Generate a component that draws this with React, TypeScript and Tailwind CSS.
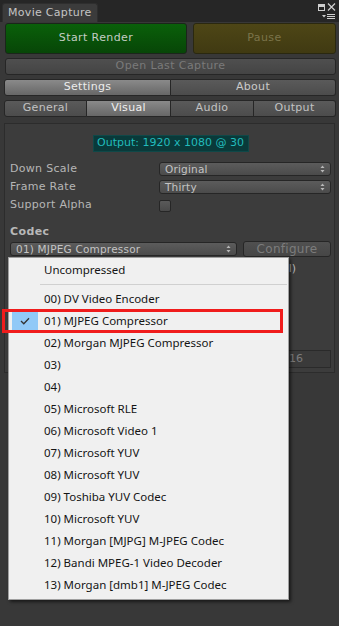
import React from "react";

const Arrows = () => (
  <svg width="5" height="8" viewBox="0 0 5 8" className="shrink-0">
    <path d="M2.5 0.5 L4.5 3 L0.5 3 Z" fill="#b8b8b8" />
    <path d="M2.5 7.5 L4.5 5 L0.5 5 Z" fill="#b8b8b8" />
  </svg>
);

const Dropdown = ({ text, className = "" }: { text: string; className?: string }) => (
  <div
    className={
      "h-[14px] rounded-[3px] border border-[#262626] bg-gradient-to-b from-[#5c5c5c] to-[#4b4b4b] text-[#c4c4c4] text-[10.5px] leading-[12px] pl-[5px] pr-[5px] flex items-center justify-between " +
      className
    }
  >
    <span className="tracking-[0.2px] whitespace-nowrap">{text}</span>
    <Arrows />
  </div>
);

const items = [
  "00) DV Video Encoder",
  "01) MJPEG Compressor",
  "02) Morgan MJPEG Compressor",
  "03)",
  "04)",
  "05) Microsoft RLE",
  "06) Microsoft Video 1",
  "07) Microsoft YUV",
  "08) Microsoft YUV",
  "09) Toshiba YUV Codec",
  "10) Microsoft YUV",
  "11) Morgan [MJPG] M-JPEG Codec",
  "12) Bandi MPEG-1 Video Decoder",
  "13) Morgan [dmb1] M-JPEG Codec",
];

export default function App() {
  return (
    <div className="w-[339px] h-[626px] bg-[#383838] relative overflow-hidden font-['DejaVu_Sans',sans-serif] text-[11px]">
      {/* title bar */}
      <div className="h-[22px] bg-[#262626] flex items-end">
        <div className="ml-[2px] h-[19px] w-[96px] bg-[#3b3b3b] rounded-t-[3px] border-t border-x border-[#2e2e2e] text-[#c4c4c4] text-[11px] leading-[18px] pl-[5px] tracking-[0.3px] whitespace-nowrap">
          Movie Capture
        </div>
        <div className="ml-auto mr-[3px] self-start pt-[2px] flex flex-col items-end">
          <svg width="18" height="10" viewBox="0 0 18 10">
            <rect x="0.5" y="2.5" width="6" height="6" fill="none" stroke="#cfcfcf" strokeWidth="1" />
            <rect x="1" y="3" width="5" height="2" fill="#cfcfcf" />
            <path d="M10 1.5 L17 8.5 M17 1.5 L10 8.5" stroke="#cfcfcf" strokeWidth="1.2" />
          </svg>
          <svg width="14" height="7" viewBox="0 0 14 7" className="mt-[1px]">
            <path d="M0 2 L4 2 L2 4.5 Z" fill="#cfcfcf" />
            <rect x="5" y="1" width="8" height="1" fill="#cfcfcf" />
            <rect x="5" y="3" width="8" height="1" fill="#cfcfcf" />
            <rect x="5" y="5" width="8" height="1" fill="#cfcfcf" />
          </svg>
        </div>
      </div>

      {/* big buttons */}
      <div className="pl-[5px] pr-[3px] pt-[1px] flex gap-[6px]">
        <div className="w-[182px] h-[31px] rounded-[3px] border border-[#1a261a] bg-gradient-to-b from-[#0a600a] to-[#074607] flex items-center justify-center text-[#c4cdc4] text-[11px] tracking-[0.4px]">
          Start Render
        </div>
        <div className="flex-1 h-[31px] rounded-[3px] border border-[#2a2810] bg-gradient-to-b from-[#4e4616] to-[#403a12] flex items-center justify-center text-[#7b744a] text-[11px] tracking-[0.4px]">
          Pause
        </div>
      </div>

      <div className="pl-[5px] pr-[3px] mt-[4px]">
        <div className="h-[17px] rounded-[3px] border border-[#262626] bg-gradient-to-b from-[#4f4f4f] to-[#444444] flex items-center justify-center text-[#7a7a7a] text-[11px] tracking-[0.4px]">
          Open Last Capture
        </div>
      </div>

      {/* settings / about */}
      <div className="pl-[4px] pr-[3px] mt-[4px] flex h-[17px]">
        <div className="w-[167px] rounded-l-[3px] border border-[#262626] bg-gradient-to-b from-[#8a8a8a] to-[#676767] flex items-center justify-center text-[#ececec] text-[11px] tracking-[0.3px]">
          Settings
        </div>
        <div className="flex-1 rounded-r-[3px] border border-l-0 border-[#262626] bg-gradient-to-b from-[#5a5a5a] to-[#4c4c4c] flex items-center justify-center text-[#cacaca] text-[11px] tracking-[0.3px]">
          About
        </div>
      </div>

      {/* sub tabs */}
      <div className="pl-[4px] pr-[3px] mt-[4px] flex h-[17px]">
        <div className="w-[83px] rounded-l-[3px] border border-[#262626] bg-gradient-to-b from-[#5a5a5a] to-[#4c4c4c] flex items-center justify-center text-[#c2c2c2] tracking-[0.3px]">
          General
        </div>
        <div className="w-[84px] border border-l-0 border-[#262626] bg-gradient-to-b from-[#8a8a8a] to-[#676767] flex items-center justify-center text-[#f0f0f0] tracking-[0.3px]">
          Visual
        </div>
        <div className="w-[83px] border border-l-0 border-[#262626] bg-gradient-to-b from-[#5a5a5a] to-[#4c4c4c] flex items-center justify-center text-[#c2c2c2] tracking-[0.3px]">
          Audio
        </div>
        <div className="flex-1 rounded-r-[3px] border border-l-0 border-[#262626] bg-gradient-to-b from-[#5a5a5a] to-[#4c4c4c] flex items-center justify-center text-[#c2c2c2] tracking-[0.3px]">
          Output
        </div>
      </div>

      {/* panel */}
      <div className="ml-[4px] mr-[4px] mt-[6px] h-[250px] border border-[#2c2c2c] bg-[#3c3c3c] pl-[5px] pr-[3px]">
        <div className="flex justify-center pt-[11px]">
          <div className="w-[156px] h-[17px] bg-[#093a3a] border border-[#0f4848] flex items-center justify-center text-[#22bcbc] text-[11px] whitespace-nowrap">
            Output: 1920 x 1080 @ 30
          </div>
        </div>

        <div className="mt-[10px] flex items-center h-[14px]">
          <div className="w-[149px] text-[#b6b6b6] tracking-[0.3px]">Down Scale</div>
          <Dropdown text="Original" className="flex-1" />
        </div>
        <div className="mt-[4px] flex items-center h-[14px]">
          <div className="w-[149px] text-[#b6b6b6] tracking-[0.3px]">Frame Rate</div>
          <Dropdown text="Thirty" className="flex-1" />
        </div>
        <div className="mt-[4px] flex items-center h-[14px]">
          <div className="w-[149px] text-[#b6b6b6] tracking-[0.3px]">Support Alpha</div>
          <div className="w-[12px] h-[12px] mt-[2px] rounded-[2px] border border-[#262626] bg-gradient-to-b from-[#5a5a5a] to-[#4a4a4a]" />
        </div>

        <div className="mt-[12px] h-[14px] font-bold text-[#b8b8b8] tracking-[0.4px]">Codec</div>
        <div className="mt-[3px] flex items-start">
          <Dropdown text="01) MJPEG Compressor" className="w-[227px] mt-[1px]" />
          <div className="ml-[6px] flex-1 h-[16px] rounded-[3px] border border-[#262626] bg-gradient-to-b from-[#505050] to-[#464646] flex items-center justify-center text-[#7c7c7c] text-[12px] tracking-[0.3px]">
            Configure
          </div>
        </div>
        <div className="mt-[4px] flex justify-end pr-[35px] text-[#b6b6b6]">(Manual)</div>
        <div className="mt-[72px] flex justify-end">
          <div className="w-[45px] h-[18px] border border-[#2a2a2a] bg-[#3a3a3a] text-[#7a7a7a] pl-[2px] leading-[16px]">16</div>
        </div>
      </div>

      {/* popup menu */}
      <div className="absolute left-[8px] top-[257px] w-[281px] h-[343px] bg-[#f0f0f0] border border-[#a0a0a0] shadow-[2px_2px_3px_rgba(0,0,0,0.55)] py-[1px] pl-[2px] font-['Noto_Sans',sans-serif] text-[11.5px] text-[#141414]">
        <div className="h-[22px] flex items-center pl-[33px]">Uncompressed</div>
        <div className="h-[7px] flex items-center pl-[29px] pr-[1px]">
          <div className="h-[1px] w-full bg-[#d0d0d0]" />
        </div>
        {items.map((t, i) => (
          <div key={t + i} className="h-[22px] flex items-center">
            <div className={"w-[26px] h-[22px] ml-[1px] flex items-center justify-center " + (i === 1 ? "bg-[#91c9f7]" : "")}>
              {i === 1 && (
                <svg width="10" height="8" viewBox="0 0 10 8">
                  <path d="M1 4 L3.8 6.8 L9 1.2" fill="none" stroke="#333" strokeWidth="1.3" />
                </svg>
              )}
            </div>
            <div className="pl-[6px] whitespace-nowrap">{t}</div>
          </div>
        ))}
      </div>

      {/* red highlight */}
      <div className="absolute left-[2px] top-[309px] w-[281px] h-[24px] border-[3px] border-[#f01c1c]" />
    </div>
  );
}
